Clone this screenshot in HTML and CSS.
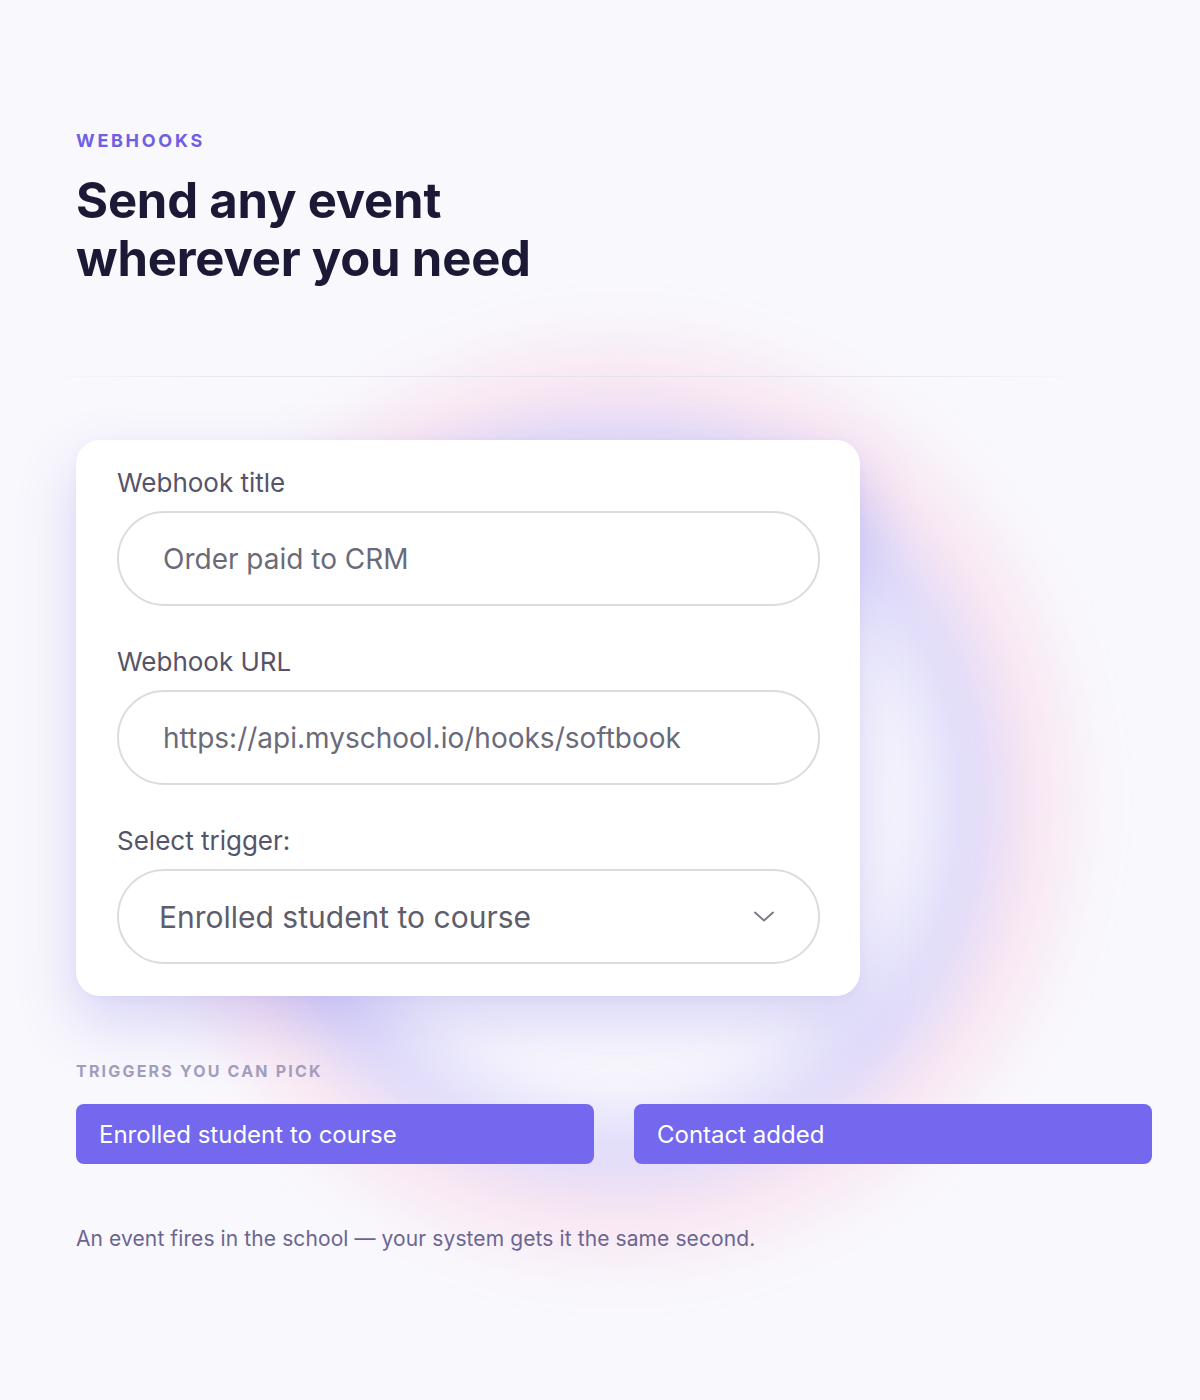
FILE: index.html
```html
<!DOCTYPE html>
<html lang="en">
<head>
<meta charset="utf-8">
<title>Webhooks</title>
<link rel="stylesheet" href="styles.css">
</head>
<body>
<div class="page">
  <div class="glow" aria-hidden="true"></div>
  <section class="hero">
    <div class="eyebrow">WEBHOOKS</div>
    <h1 class="title">Send any event<br>wherever you need</h1>
  </section>
  <div class="divider"></div>
  <div class="card">
    <div class="field">
      <label class="label">Webhook title</label>
      <div class="input">Order paid to CRM</div>
    </div>
    <div class="field">
      <label class="label">Webhook URL</label>
      <div class="input">https://api.myschool.io/hooks/softbook</div>
    </div>
    <div class="field">
      <label class="label">Select trigger:</label>
      <div class="input select">
        <span class="select-text">Enrolled student to course</span>
        <svg class="chevron" width="24" height="24" viewBox="0 0 24 24" fill="none"><path d="M3 7.5l9 8 9-8" stroke="#7d7b88" stroke-width="2" stroke-linecap="round" stroke-linejoin="round"/></svg>
      </div>
    </div>
  </div>
  <div class="triggers-label">TRIGGERS YOU CAN PICK</div>
  <div class="triggers">
    <div class="trigger">Enrolled student to course</div>
    <div class="trigger">Contact added</div>
  </div>
  <p class="note">An event fires in the school — your system gets it the same second.</p>
</div>
</body>
</html>
```
FILE: styles.css
```css
* { box-sizing: border-box; }
html, body { margin: 0; padding: 0; }
body {
  background: #f9f8fd;
  font-family: Inter, "Noto Sans", sans-serif;
  width: 1200px;
  min-height: 1400px;
  overflow: hidden;
}
.page {
  position: relative;
  padding: 130px 48px 120px 76px;
  min-height: 1400px;
}
.glow {
  position: absolute;
  left: 130px;
  top: 305px;
  width: 980px;
  height: 990px;
  border-radius: 50%;
  background: radial-gradient(closest-side, rgba(255,255,255,0) 56%, rgba(145,135,245,0.26) 71%, rgba(250,170,205,0.22) 84%, rgba(255,200,220,0) 100%);
  filter: blur(18px);
  z-index: 0;
}
.hero, .divider, .card, .triggers-label, .triggers, .note { position: relative; z-index: 1; }
.eyebrow {
  font-size: 18px;
  line-height: 22px;
  font-weight: 700;
  letter-spacing: 2.7px;
  color: #6e60e2;
  margin-bottom: 20px;
}
.title {
  margin: 0;
  font-size: 49px;
  line-height: 58px;
  font-weight: 700;
  letter-spacing: -0.2px;
  color: #1b1936;
}
.divider {
  margin: 88px 64px 0 -36px;
  height: 1px;
  background: linear-gradient(90deg, rgba(220,218,235,0) 0%, #e6e4f0 20%, #e6e4f0 80%, rgba(220,218,235,0) 100%);
}
.card {
  margin-top: 63px;
  width: 784px;
  background: #ffffff;
  border-radius: 24px;
  padding: 28px 40px 32px 41px;
  box-shadow: 0 26px 60px rgba(110, 96, 220, 0.24), 0 2px 8px rgba(110, 96, 220, 0.06);
  display: flex;
  flex-direction: column;
  gap: 41px;
}
.field { display: flex; flex-direction: column; gap: 13px; }
.label {
  font-size: 26px;
  line-height: 30px;
  color: #55546a;
}
.input {
  height: 95px;
  border: 2px solid #dcdce0;
  border-radius: 48px;
  padding: 0 44px;
  display: flex;
  align-items: center;
  font-size: 28px;
  color: #6b6a79;
}
.select { justify-content: space-between; padding: 0 42px 0 40px; }
.select-text { font-size: 30px; color: #5e5d6c; }
.chevron { display: block; }
.triggers-label {
  margin-top: 65px;
  font-size: 16px;
  line-height: 20px;
  font-weight: 700;
  letter-spacing: 2.2px;
  color: #a19dbd;
}
.triggers {
  margin-top: 23px;
  display: grid;
  grid-template-columns: 1fr 1fr;
  gap: 40px;
}
.trigger {
  height: 60px;
  border-radius: 8px;
  background: #7468ee;
  color: #ffffff;
  font-size: 24px;
  display: flex;
  align-items: center;
  padding-left: 23px;
}
.note {
  margin: 62px 0 0;
  font-size: 21px;
  line-height: 26px;
  letter-spacing: 0.1px;
  color: #6b6592;
}
```
